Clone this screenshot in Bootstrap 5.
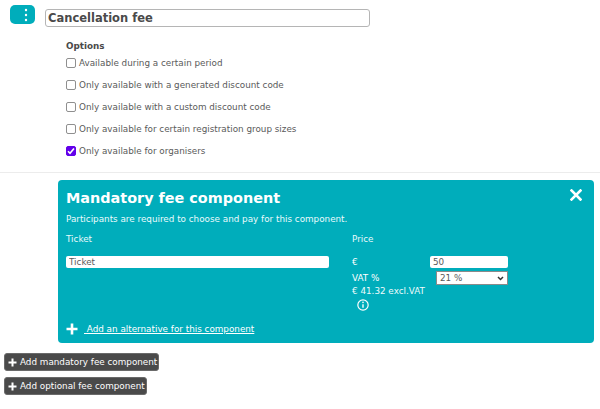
<!DOCTYPE html>
<html lang="en">
<head>
<meta charset="utf-8">
<title>Fee</title>
<link href="https://cdn.jsdelivr.net/npm/bootstrap@5.3.0/dist/css/bootstrap.min.css" rel="stylesheet">
<style>
html,body{height:409px;overflow:hidden}
body{font-family:"DejaVu Sans",sans-serif;font-size:8.8px;line-height:14px;color:#4a4a4a;background:#fff}
.fee-head{padding:8px 0 0 10px;height:29px;gap:10px}
.drag-tag{width:25px;height:19px;background:#00adbb;border-radius:5px;margin-top:-3px;padding-left:7px}
.drag-tag svg{display:block}
.title-input{width:325px;height:18px;border:1px solid #b5b5b5;border-radius:3px;padding:0 2px;font-weight:700;font-size:11.5px;color:#4a4a4a;font-family:inherit;margin-top:1px;outline:0}
.opts{padding:10px 0 0 66px;height:143px}
.opts-title{font-weight:700;line-height:14px;margin-bottom:3px}
.opt{height:22px;gap:3px;align-items:flex-start;margin:0;color:#5a5a5a;position:relative}
.opt input{appearance:none;width:10px;height:10px;margin:2px 0 0;flex:none;border:1px solid #8f8f8f;border-radius:2px;background:#fff}
.opt input:checked{background:#6200ea;border-color:#6200ea}
.tick-mark{position:absolute;left:1px;top:3px}
.sep{border-top:1px solid #ececec;height:0;margin:0}
.panel{margin:7px 6px 0 58px;height:163px;background:#00adbb;border-radius:4px;color:#fff;padding:8px 8px;position:relative}
.panel h2{font-size:14.4px;line-height:20px;font-weight:700;margin:0 0 4px}
.panel p{margin:0 0 6px;line-height:14px;color:#eafbfc}
.close-x{position:absolute;right:12px;top:9px;display:block}
.cols{display:flex}
.col-ticket{width:286px}
.col-price{width:156px}
.lab{height:15px;line-height:15px;margin-bottom:1px;color:#e8fafb}
.fld{background:#fff;border:0;border-radius:2px;height:12px;padding:0 3px;font-family:inherit;font-size:8.8px;line-height:12px;color:#5a5a5a;outline:0;display:block}
.t-in{width:263px;margin:9px 0 0 0}
.pr-row{display:flex;justify-content:space-between;align-items:center}
.p-in{width:78px}
.r1{height:13px;margin-top:8px}
.sel{width:72px;height:14px;border:1px solid #8a8a8a;background:#fff;font-size:8.8px;line-height:12px;color:#5a5a5a;padding:0 3px;display:flex;justify-content:space-between;align-items:center}
.vat{height:14px;margin-top:3px}
.ex{line-height:14px;color:#eefbfc;margin-top:-1px}
.inf{display:block;margin:1px 0 0 5px}
.alt{position:absolute;left:8px;bottom:7px;display:flex;align-items:center;color:#fff}
.alt a{color:#fff;text-decoration:underline;margin-left:6px}
.acts{padding:10px 0 0 4px;gap:6px;align-items:flex-start}
.act{background:#4a4a4a;color:#fff;border:1px solid #6a6a6a;border-radius:3px;font-size:8.8px;line-height:14px;height:18px;padding:0 1px 0 3px;display:flex;align-items:center;gap:3px;font-family:inherit}
</style>
</head>
<body>
<div class="d-flex fee-head">
  <div class="drag-tag d-flex align-items-center justify-content-center flex-none">
    <svg width="4" height="14" viewBox="0 0 4 14"><circle cx="2" cy="2" r="1.2" fill="#fff"/><circle cx="2" cy="7" r="1.2" fill="#fff"/><circle cx="2" cy="12" r="1.2" fill="#fff"/></svg>
  </div>
  <input class="title-input" type="text" value="Cancellation fee">
</div>
<div class="opts">
  <div class="opts-title">Options</div>
  <label class="opt d-flex"><input type="checkbox"><span>Available during a certain period</span></label>
  <label class="opt d-flex"><input type="checkbox"><span>Only available with a generated discount code</span></label>
  <label class="opt d-flex"><input type="checkbox"><span>Only available with a custom discount code</span></label>
  <label class="opt d-flex"><input type="checkbox"><span>Only available for certain registration group sizes</span></label>
  <label class="opt d-flex"><input type="checkbox" checked><svg class="tick-mark" width="8" height="8" viewBox="0 0 8 8"><path d="M1 4.2l2 2L7 1.5" stroke="#fff" stroke-width="1.6" fill="none"/></svg><span>Only available for organisers</span></label>
</div>
<div class="sep"></div>
<div class="panel">
  <svg class="close-x" width="12" height="12" viewBox="0 0 12 12"><path d="M1.5 1.5l9 9M10.5 1.5l-9 9" stroke="#fff" stroke-width="2.6" stroke-linecap="square"/></svg>
  <h2>Mandatory fee component</h2>
  <p>Participants are required to choose and pay for this component.</p>
  <div class="cols">
    <div class="col-ticket">
      <div class="lab">Ticket</div>
      <input class="fld t-in" type="text" value="Ticket">
    </div>
    <div class="col-price">
      <div class="lab">Price</div>
      <div class="pr-row r1"><span>€</span><input class="fld p-in" type="text" value="50"></div>
      <div class="pr-row vat"><span>VAT %</span><div class="sel"><span>21 %</span><svg width="7" height="5" viewBox="0 0 7 5"><path d="M1 1l2.5 2.5L6 1" stroke="#333" stroke-width="1.5" fill="none"/></svg></div></div>
      <div class="ex">€ 41.32 excl.VAT</div>
      <svg class="inf" width="12" height="12" viewBox="0 0 13 13"><circle cx="6.5" cy="6.5" r="5.6" stroke="#fff" stroke-width="1.3" fill="none"/><path d="M6.5 5.6v3.8" stroke="#fff" stroke-width="1.5"/><circle cx="6.5" cy="3.7" r=".9" fill="#fff"/></svg>
    </div>
  </div>
  <div class="alt">
    <svg width="12" height="12" viewBox="0 0 12 12"><path d="M6 .5v11M.5 6h11" stroke="#fff" stroke-width="2.6"/></svg>
    <a href="#">&nbsp;Add an alternative for this component</a>
  </div>
</div>
<div class="acts d-flex flex-column">
  <button class="act" type="button"><svg width="9" height="9" viewBox="0 0 9 9"><path d="M4.5 .5v8M.5 4.5h8" stroke="#fff" stroke-width="2"/></svg>Add mandatory fee component</button>
  <button class="act" type="button"><svg width="9" height="9" viewBox="0 0 9 9"><path d="M4.5 .5v8M.5 4.5h8" stroke="#fff" stroke-width="2"/></svg>Add optional fee component</button>
</div>
</body>
</html>
